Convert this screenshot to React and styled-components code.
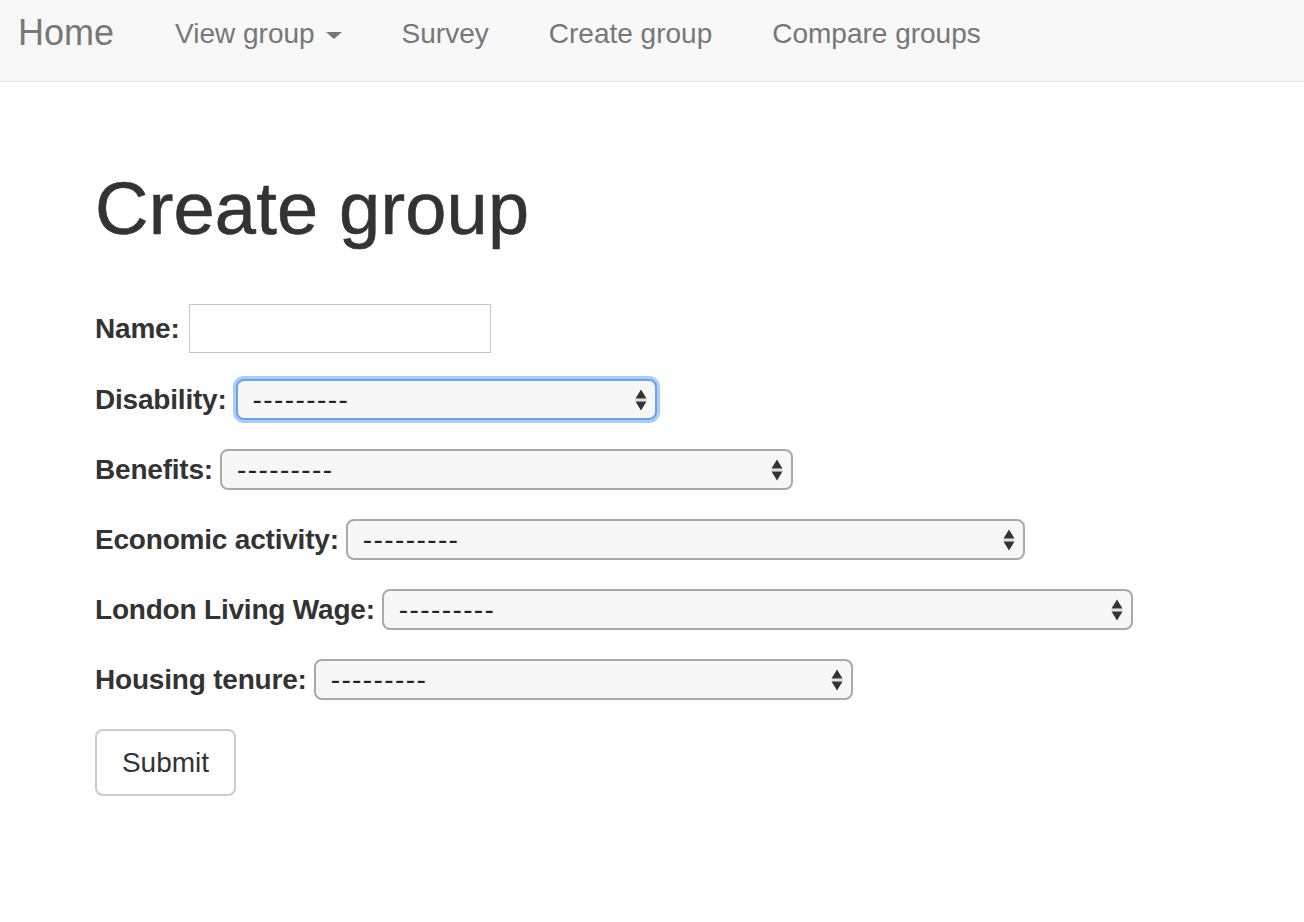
import React from "react";
import styled, { createGlobalStyle } from "styled-components";

const GlobalStyle = createGlobalStyle`
  html, body {
    margin: 0;
    padding: 0;
    background: #fff;
    font-family: "Liberation Sans", Arial, Helvetica, sans-serif;
    color: #333;
  }
`;

const Navbar = styled.nav`
  display: flex;
  align-items: flex-start;
  height: 81px;
  background-color: #f8f8f8;
  border-bottom: 1px solid #e7e7e7;
  padding-left: 18px;
`;

const Brand = styled.a`
  font-size: 36px;
  line-height: 36px;
  padding-top: 15px;
  color: #777;
  text-decoration: none;
  margin-right: 31px;
`;

const NavLink = styled.a`
  display: flex;
  align-items: center;
  font-size: 28px;
  line-height: 28px;
  padding: 20px 30px 0;
  color: #777;
  text-decoration: none;
  cursor: pointer;
`;

const Caret = styled.span`
  display: inline-block;
  width: 0;
  height: 0;
  margin-left: 11px;
  margin-top: 2px;
  border-top: 7px solid #777;
  border-left: 8px solid transparent;
  border-right: 8px solid transparent;
`;

const Main = styled.main`
  padding: 0 95px;
`;

const Title = styled.h1`
  font-size: 74px;
  line-height: 80px;
  font-weight: 400;
  letter-spacing: 0.2px;
  color: #333;
  margin: 87px 0 55px;
  -webkit-text-stroke: 0.6px #333;
`;

const Form = styled.form`
  display: flex;
  flex-direction: column;
  align-items: flex-start;
`;

const Row = styled.div`
  display: flex;
  align-items: center;
  gap: ${(p) => p.$gap || 7}px;
  margin-bottom: ${(p) => p.$space}px;
`;

const Label = styled.label`
  font-size: 28px;
  font-weight: 700;
  letter-spacing: -0.2px;
  color: #333;
`;

const TextInput = styled.input`
  box-sizing: border-box;
  width: 302px;
  height: 49px;
  border: 1px solid #c4c4c4;
  background: #fff;
  font-size: 26px;
  padding: 0 10px;
  outline: none;
`;

const SelectWrap = styled.div`
  position: relative;
  display: inline-flex;
  margin-left: ${(p) => (p.$focused ? 2 : 0)}px;
`;

const Select = styled.select`
  box-sizing: border-box;
  appearance: none;
  -webkit-appearance: none;
  width: ${(p) => p.$width}px;
  height: 41px;
  padding: 0 40px 0 15px;
  font-family: "Liberation Sans", Arial, sans-serif;
  font-size: 28px;
  letter-spacing: 1.4px;
  color: #222;
  background-color: #f7f7f7;
  border: 2px solid ${(p) => (p.$focused ? "#69a3ec" : "#a9a9a9")};
  border-radius: 8px;
  box-shadow: ${(p) => (p.$focused ? "0 0 0 3px #a8cdf7" : "none")};
  outline: none;
`;

const Arrows = styled.svg`
  position: absolute;
  right: 10px;
  top: 50%;
  transform: translateY(-50%);
  pointer-events: none;
`;

const SubmitButton = styled.button`
  width: 141px;
  height: 67px;
  font-family: "Liberation Sans", Arial, sans-serif;
  font-size: 28px;
  color: #333;
  background: #fff;
  border: 2px solid #ccc;
  border-radius: 8px;
  cursor: pointer;
`;

const fields = [
  { label: "Disability:", width: 421, focused: true },
  { label: "Benefits:", width: 573 },
  { label: "Economic activity:", width: 679 },
  { label: "London Living Wage:", width: 751 },
  { label: "Housing tenure:", width: 539 },
];

const StepperArrows = () => (
  <Arrows width="12" height="22" viewBox="0 0 12 22">
    <path d="M6 0.5 L11.5 9.5 L0.5 9.5 Z" fill="#333" />
    <line x1="0.5" y1="11" x2="11.5" y2="11" stroke="#c8c8c8" strokeWidth="1" />
    <path d="M0.5 12.5 L11.5 12.5 L6 21.5 Z" fill="#333" />
  </Arrows>
);

export default function App() {
  return (
    <>
      <GlobalStyle />
      <Navbar>
        <Brand href="#">Home</Brand>
        <NavLink>
          View group
          <Caret />
        </NavLink>
        <NavLink>Survey</NavLink>
        <NavLink>Create group</NavLink>
        <NavLink>Compare groups</NavLink>
      </Navbar>
      <Main>
        <Title>Create group</Title>
        <Form onSubmit={(e) => e.preventDefault()}>
          <Row $space={26} $gap={9}>
            <Label htmlFor="name">Name:</Label>
            <TextInput id="name" type="text" />
          </Row>
          {fields.map((f) => (
            <Row key={f.label} $space={29}>
              <Label>{f.label}</Label>
              <SelectWrap $focused={f.focused}>
                <Select $width={f.width} $focused={f.focused} defaultValue="">
                  <option value="">---------</option>
                </Select>
                <StepperArrows />
              </SelectWrap>
            </Row>
          ))}
          <SubmitButton type="submit">Submit</SubmitButton>
        </Form>
      </Main>
    </>
  );
}
